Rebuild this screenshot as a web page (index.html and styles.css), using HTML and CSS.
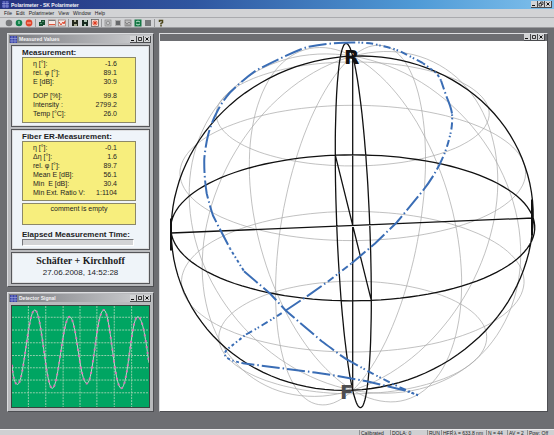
FILE: index.html
```html
<!DOCTYPE html>
<html lang="en">
<head>
<meta charset="utf-8">
<title>Polarimeter - SK Polarimeter</title>
<link rel="stylesheet" href="styles.css">
</head>
<body>
<svg class="defs" aria-hidden="true">
  <symbol id="logo" viewBox="0 0 7 7"><rect width="7" height="7" fill="#3b45a5"/><path d="M2 0V7M5 0V7M0 2.500H7M0 5H7" stroke="#a8afe6" stroke-width=".6"/></symbol>
  <symbol id="min" viewBox="0 0 6 6"><path d="M1 4.500H4" stroke="#111"/></symbol>
  <symbol id="max" viewBox="0 0 6 6"><path d="M1.500 1.500H4.500V4.500H1.500Z" fill="none" stroke="#222" stroke-width=".9"/></symbol>
  <symbol id="close" viewBox="0 0 6 6"><path d="M1.500 1.500L4.500 4.500M4.500 1.500L1.500 4.500" stroke="#111"/></symbol>
</svg>

<header class="title-bar main-title">
  <svg class="logo"><use href="#logo"/></svg>
  <h1>Polarimeter - SK Polarimeter</h1>
  <div class="controls">
    <button aria-label="Minimize"><svg><use href="#min"/></svg></button>
    <button aria-label="Restore"><svg viewBox="0 0 6 6"><path d="M2.500 2V1H5V3.500H4M1 2.500H3.500V5H1Z" fill="none" stroke="#222" stroke-width=".8"/></svg></button>
    <button class="close" aria-label="Close"><svg><use href="#close"/></svg></button>
  </div>
</header>
<nav class="menu">
  <a href="#">File</a><a href="#">Edit</a><a href="#">Polarimeter</a><a href="#">View</a><a href="#">Window</a><a href="#">Help</a>
</nav>
<div class="toolbar">
  <button aria-label="Idle"><svg viewBox="0 0 8 8"><circle cx="4" cy="4" r="3.300" fill="#77797b"/></svg></button>
  <button aria-label="Start"><svg viewBox="0 0 8 8"><circle cx="4" cy="4" r="3.300" fill="#12804a"/><path d="M4 2V5" stroke="#bfe6cf"/></svg></button>
  <button aria-label="Stop"><svg viewBox="0 0 8 8"><circle cx="4" cy="4" r="3.400" fill="#e0452c"/><path d="M2 4H6" stroke="#f8c3b0"/></svg></button>
  <i></i>
  <button aria-label="Copy"><svg viewBox="0 0 8 8"><path d="M3 1H7V6H5V7H1V3H3Z" fill="#174e31"/><path d="M2 4.500H4M4 2.500H6" stroke="#6bb088" stroke-width=".7"/></svg></button>
  <button aria-label="Chart"><svg viewBox="0 0 8 8"><rect x=".5" y="1" width="7" height="6" fill="#f6e9e5" stroke="#99786f" stroke-width=".7"/><path d="M1 5.500H7" stroke="#e0553b"/><path d="M1 1.500H7" stroke="#77797b"/></svg></button>
  <button aria-label="Signal"><svg viewBox="0 0 8 8"><rect x=".5" y="1" width="7" height="6" fill="#f6e9e5" stroke="#99786f" stroke-width=".7"/><path d="M1 3L3 6L5 3L6 5L7 2" fill="none" stroke="#e0452c"/></svg></button>
  <i></i>
  <button aria-label="Save"><svg viewBox="0 0 8 8"><path d="M1 1H7V7H1Z" fill="#25291d"/><path d="M3 1H5V3H3ZM3 5H6V7H3Z" fill="#a9ab91"/></svg></button>
  <button aria-label="Save as"><svg viewBox="0 0 8 8"><path d="M1 1H7V7H1Z" fill="#17291f"/><path d="M3 1H6V3H3ZM3 5H5V7H3Z" fill="#a9c0ae"/></svg></button>
  <button aria-label="Record"><svg viewBox="0 0 8 8"><rect x=".5" y=".5" width="7" height="7" fill="#f4d8cd" stroke="#555" stroke-width=".7"/><path d="M4 1.500V6.500M1.500 4H6.500M2.300 2.300L5.700 5.700M5.700 2.300L2.300 5.700" stroke="#e0391f"/></svg></button>
  <i></i>
  <button aria-label="Sphere"><svg viewBox="0 0 8 8"><rect x="1" y="1" width="6" height="6" fill="#c5c6c8" stroke="#888" stroke-width=".7"/><circle cx="4" cy="4" r="1.800" fill="none" stroke="#777" stroke-width=".7"/></svg></button>
  <button aria-label="Block"><svg viewBox="0 0 8 8"><rect x="1" y="1" width="6" height="6" fill="#aaa"/><rect x="2" y="2" width="4" height="4" fill="#66686a"/></svg></button>
  <button aria-label="Grid"><svg viewBox="0 0 8 8"><rect x="1" y="1" width="6" height="6" fill="#bbb" stroke="#777" stroke-width=".7"/><path d="M1 3L3 5L5 3L7 5M2 6H6" fill="none" stroke="#777" stroke-width=".8"/></svg></button>
  <button aria-label="Detector"><svg viewBox="0 0 8 8"><rect x=".5" y=".5" width="7" height="7" fill="#147744"/><path d="M2 3Q4 1 6 3M2 5Q4 7 6 5" fill="none" stroke="#bfe6cf"/></svg></button>
  <button aria-label="Panel"><svg viewBox="0 0 8 8"><rect x="1" y="1" width="6" height="6" fill="#77797b"/></svg></button>
  <i></i>
  <button aria-label="Help"><svg viewBox="0 0 8 8"><path d="M2.500 3V1.500H5.500V3.500L4 4.500V5.500M4 6V7.500" fill="none" stroke="#4b4618" stroke-width="1.500"/></svg></button>
</div>

<main class="workspace">
  <div class="side">
    <section class="window values">
      <div class="title-bar">
        <svg class="logo"><use href="#logo"/></svg>
        <h2>Measured Values</h2>
        <div class="controls">
          <button aria-label="Minimize"><svg><use href="#min"/></svg></button>
          <button aria-label="Maximize"><svg><use href="#max"/></svg></button>
          <button class="close" aria-label="Close"><svg><use href="#close"/></svg></button>
        </div>
      </div>
      <div class="panel measurement">
        <h3>Measurement:</h3>
        <div class="box">
          <table>
            <tr><th>η [°]:</th><td>-1.6</td></tr>
            <tr><th>rel. φ [°]:</th><td>89.1</td></tr>
            <tr><th>E [dB]:</th><td>30.9</td></tr>
            <tr class="group"><th>DOP [%]:</th><td>99.8</td></tr>
            <tr><th>Intensity :</th><td>2799.2</td></tr>
            <tr><th>Temp [°C]:</th><td>26.0</td></tr>
          </table>
        </div>
      </div>
      <div class="panel fiber">
        <h3>Fiber ER-Measurement:</h3>
        <div class="box">
          <table>
            <tr><th>η [°]:</th><td>-0.1</td></tr>
            <tr><th>Δη [°]:</th><td>1.6</td></tr>
            <tr><th>rel. φ [°]:</th><td>89.7</td></tr>
            <tr><th>Mean E [dB]:</th><td>56.1</td></tr>
            <tr><th>Min&nbsp; E [dB]:</th><td>30.4</td></tr>
            <tr><th>Min Ext. Ratio V:</th><td>1:1104</td></tr>
          </table>
        </div>
        <p class="box comment">comment is empty</p>
        <h3 id="elapsed">Elapsed Measurement Time:</h3>
        <div class="progress" role="progressbar" aria-labelledby="elapsed"></div>
      </div>
      <div class="panel brand">
        <strong>Schäfter + Kirchhoff</strong>
        <time>27.06.2008, 14:52:28</time>
      </div>
    </section>

    <section class="window detector">
      <div class="title-bar">
        <svg class="logo"><use href="#logo"/></svg>
        <h2>Detector Signal</h2>
        <div class="controls">
          <button aria-label="Minimize"><svg><use href="#min"/></svg></button>
          <button aria-label="Maximize"><svg><use href="#max"/></svg></button>
          <button class="close" aria-label="Close"><svg><use href="#close"/></svg></button>
        </div>
      </div>
      <svg class="scope" viewBox="12 304 138 103" preserveAspectRatio="none">
        <path class="grid" d="M28.500 304V407M46 304V407M63.500 304V407M80.500 304V407M97.500 304V407M115 304V407M132.500 304V407M12 315.500H150M12 328.500H150M12 341.500H150M12 354.500H150M12 367H150M12 379.500H150M12 392.500H150"/>
        <path class="wave" d="M12 364C13 377 15 384 17.500 384C24 384 28 308 35 308C42 308 46 388 52.500 388C59 388 63 315 70 315C77 315 80 383 87.500 383C94 383 97 308 104.500 308C111 308 115 388 122 388C129 388 132 315 138.500 315C144 315 147 342 150 362"/>
        <path class="marks" d="M12 364C13 377 15 384 17.500 384C24 384 28 308 35 308C42 308 46 388 52.500 388C59 388 63 315 70 315C77 315 80 383 87.500 383C94 383 97 308 104.500 308C111 308 115 388 122 388C129 388 132 315 138.500 315C144 315 147 342 150 362"/>
      </svg>
    </section>
  </div>

  <section class="window sphere">
    <div class="title-bar">
      <div class="controls">
        <button aria-label="Minimize"><svg><use href="#min"/></svg></button>
        <button aria-label="Maximize"><svg><use href="#max"/></svg></button>
        <button class="close" aria-label="Close"><svg><use href="#close"/></svg></button>
      </div>
    </div>
    <svg class="plot" viewBox="160 41 387 369">
      <path id="minor" class="minor"/>
      <path id="major" class="major"/>
      <path class="major heavy" d="M171 218V250M532 199V235"/>
      <text class="pole" x="344" y="63">R</text>
      <text class="pole south" x="340" y="398">F</text>
      <path class="trace" d="M352 42C336 42 320 44 306.700 46.700C297 50 275 60 256 70C246 77 238 84 230 92C224 99 220 105 216.700 112C213 119 210 127 208 135C206 143 205 151 204.300 158C204 170 205 182 206.700 193C209 202 211 209 213 215L218 225L230 248"/>
      <path class="trace dots" d="M230 248L244 270.700"/>
      <path class="trace" d="M244 270.700L270 293L285.700 310L321.700 340.700C332 348 341 356 351.700 361.700"/>
      <path class="trace short" d="M351.700 361.700L371.700 372.700L400 387L418 394.700"/>
      <path class="trace" d="M405 390L366.700 380.700L335 375L315 372L255 364.300L243 362.700"/>
      <path class="trace dots" d="M418 394.700L405 390M243 362.700C234 361 229 359 226.700 357C224 354 224 353 227 349L246 334"/>
      <path class="trace short" d="M246 334L261.700 325L281.700 312.700"/>
      <path class="trace" d="M285.700 310L306.700 296L328 281"/>
      <path class="trace short" d="M328 281L351.700 262.700"/>
      <path class="trace" d="M351.700 262.700L375 243L396.700 222L423 190C430 181 435 173 440 163"/>
      <path class="trace short" d="M440 163C445 153 448 144 450 135C452 128 452.500 120 452 113"/>
      <path class="trace" d="M452 113C451 107 449 102 446.700 96.700L441 80"/>
      <path class="trace dots" d="M441 80L437 73L423 62.700"/>
      <path class="trace short" d="M423 62.700L400 50.700C393 48 386 46 380 45C374 43 366 42 352 42"/>
    </svg>
  </section>
</main>

<footer class="status">
  <span>Calibrated</span><span>DOLA: 0</span><span>RUN</span><span>HFR</span><span>λ = 633.8 nm</span><span>N = 44</span><span>AV = 2</span><span>Pow: Off</span>
</footer>
<script src="sphere.js"></script>
</body>
</html>
```
FILE: styles.css
```css
* { box-sizing: border-box; }
body {
  margin: 0;
  height: 100vh;
  display: flex;
  flex-direction: column;
  overflow: hidden;
  background: #6d6e72;
  color: #1d1d1f;
  font-family: "Liberation Sans", Arial, sans-serif;
  font-size: 5px;
}
h1, h2, h3, p { margin: 0; }
svg { display: block; }
.defs { width: 0; height: 0; position: absolute; }
button { padding: 0; border: 0; background: none; }

.title-bar {
  flex: none;
  display: flex;
  align-items: center;
  gap: 2px;
  height: 8px;
  padding: 0 1px;
  color: #f4f4f6;
  background: linear-gradient(90deg, #7a7b80, #c4c5c8 85%);
}
.title-bar h1, .title-bar h2 { font-size: 5px; line-height: 8px; }
.logo { width: 7px; height: 7px; }
.controls { display: flex; margin-left: auto; }
.controls button {
  width: 7px;
  height: 7px;
  background: #d3d4d6;
  border-right: 1px solid #4a4b4e;
  border-bottom: 1px solid #4a4b4e;
}
.controls svg { width: 6px; height: 6px; }
.main-title {
  height: 9px;
  padding: 0 2px;
  background: linear-gradient(90deg, #27337f, #2f56a0 35%, #4f9ad6 75%, #7fc0ec);
}
.menu {
  flex: none;
  display: flex;
  gap: 4px;
  height: 9px;
  padding: 0 4px;
  line-height: 9px;
  background: #d2d3d5;
  border-bottom: 1px solid #a9aaad;
}
.menu a { color: inherit; text-decoration: none; }
.toolbar {
  flex: none;
  display: flex;
  align-items: center;
  gap: 2px;
  height: 10px;
  padding: 0 5px;
  background: #d2d3d5;
  border-bottom: 1px solid #9a9b9e;
}
.toolbar svg { width: 8px; height: 8px; }
.toolbar i { width: 1px; height: 8px; background: #98999c; }

.workspace {
  flex: 1;
  min-height: 0;
  display: flex;
  align-items: stretch;
  gap: 5px;
  padding: 5px 6px 17px 7px;
}
.side { flex: none; width: 147px; display: flex; flex-direction: column; gap: 5px; }
.window {
  display: flex;
  flex-direction: column;
  padding: 1px;
  background: #b9babd;
  border: 1px solid #dcdde0;
  border-right-color: #4d4e52;
  border-bottom-color: #4d4e52;
}
.values { gap: 2px; padding-bottom: 2px; }
.panel {
  margin: 0 2px;
  padding: 0 10px;
  background: #eff4f9;
  border: 1px solid #55565a;
  outline: 1px solid #dddee0;
  outline-offset: -2px;
}
.measurement { padding-top: 2px; padding-bottom: 3px; }
.panel h3 { font-size: 8px; line-height: 9px; }
.box {
  background: #f7ee7d;
  border: 1px solid #8c8868;
  width: 114px;
  font-size: 7px;
}
table { width: 100%; border-collapse: collapse; }
th, td { padding: 0; line-height: 9px; font-weight: normal; white-space: nowrap; }
th { text-align: left; padding-left: 10px; }
td { text-align: right; padding-right: 18px; }
.group th, .group td { padding-top: 5px; }
.measurement .box { padding: 1px 0 4px; }
.fiber { padding-top: 2px; padding-bottom: 3px; }
.fiber .box { padding: 1px 0 3px; }
.fiber .comment { margin: 2px 0 5px; padding: 0; height: 22px; line-height: 9px; text-align: center; }
.progress { width: 112px; height: 7px; background: #d3d4d6; border: 1px solid #77787c; border-right-color: #fff; border-bottom-color: #fff; }
.brand { display: flex; flex-direction: column; align-items: center; padding: 2px 0 5px; }
.brand strong { font: bold 10px/12px "Liberation Serif", serif; }
.brand time { font-size: 8px; line-height: 11px; }

.detector { flex: 1; min-height: 0; }
.scope { flex: 1; min-height: 0; margin: 3px 2px 2px; background: #00a562; border: 1px solid #37453e; }
.scope path { fill: none; }
.grid { stroke: #93cfad; stroke-width: 1; stroke-dasharray: 2 1; }
.wave { stroke: #b9dcc4; stroke-width: 1; }
.marks { stroke: #d873b8; stroke-width: 2; stroke-dasharray: 2 4; }

.sphere { flex: 1; min-width: 0; padding: 0; }
.sphere .title-bar { height: 7px; padding-right: 2px; background: #6d6e72; }
.plot { flex: 1; min-height: 0; width: 100%; background: #fff; }
.plot path { fill: none; }
.minor { stroke: #a6a6a6; stroke-width: 0.7px; }
.major { stroke: #111; stroke-width: 1.3px; }
.heavy { stroke-width: 2px; }
.pole { font: bold 20px "DejaVu Sans", sans-serif; fill: #111; }
.south { fill: #4d4d4f; }
.trace { stroke: #3a6db5; stroke-width: 2px; stroke-dasharray: 18 3 1.500 3; }
.short { stroke-dasharray: 7 3 1.500 2 1.500 3; }
.dots { stroke-dasharray: 1.500 2.500 3 2.500; }

.status {
  flex: none;
  display: grid;
  grid-template-columns: 30px 36px 13px 10px 33px 20px 19px 27px;
  gap: 1px;
  justify-content: end;
  height: 6px;
  overflow: hidden;
  background: #cfd0d2;
  border-top: 1px solid #ececee;
}
.status span { padding-left: 1px; line-height: 7px; white-space: nowrap; border-left: 1px solid #8f9093; }
```
FILE: sphere.js
```js
// Projects a unit sphere with slight perspective and draws its wireframe.
const CENTER = [352.7, 225];
const DEPTH = 0.035;

function project(a, b, c) {
  const z = -0.08 * a + 0.91 * b + 0.4 * c;
  const s = 1 / (1 - DEPTH * z);
  const x = CENTER[0] + s * (181 * a + 18 * b);
  const y = CENTER[1] + s * (-7.5 * a + 72.5 * b - 167 * c);
  return x.toFixed(1) + " " + y.toFixed(1);
}

function ring(pointAt) {
  const points = [];
  for (let d = 0; d < 360; d += 3) points.push(pointAt(d * Math.PI / 180));
  return "M" + points.join("L") + "Z";
}

function parallel(lat) {
  const r = Math.cos(lat * Math.PI / 180);
  const h = Math.sin(lat * Math.PI / 180);
  return ring(t => project(r * Math.cos(t), r * Math.sin(t), h));
}

function meridian(lon) {
  const a = Math.cos(lon * Math.PI / 180);
  const b = Math.sin(lon * Math.PI / 180);
  return ring(t => project(a * Math.cos(t), b * Math.cos(t), Math.sin(t)));
}

function axis(a, b, c) {
  return "M" + project(a, b, c) + "L" + project(-a, -b, -c);
}

document.getElementById("minor").setAttribute("d",
  [-42, -19, 19, 42].map(parallel).join("") + [30, 60, 120, 150].map(meridian).join(""));
document.getElementById("major").setAttribute("d",
  parallel(0) + meridian(0) + meridian(90) + axis(1, 0, 0) + axis(0, 1, 0) + axis(0, 0, 1));
```
